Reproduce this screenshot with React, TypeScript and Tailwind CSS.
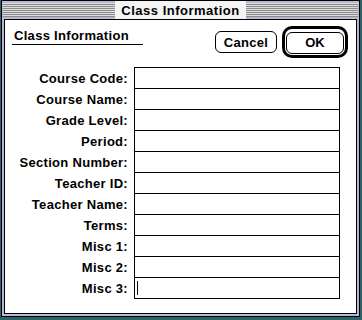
import React from "react";

const fields = [
  "Course Code:",
  "Course Name:",
  "Grade Level:",
  "Period:",
  "Section Number:",
  "Teacher ID:",
  "Teacher Name:",
  "Terms:",
  "Misc 1:",
  "Misc 2:",
  "Misc 3:",
];

export default function App() {
  return (
    <div
      className="w-[362px] h-[320px] bg-[#2a6466] overflow-hidden"
      style={{ fontFamily: '"Liberation Sans", Arial, sans-serif' }}
    >
      {/* window */}
      <div className="ml-[1px] w-[359px] h-[317px] border border-black bg-[#b8b8d6] flex flex-col">
        {/* title bar */}
        <div className="h-[18px] flex items-center bg-[#dcdcdc] bg-[repeating-linear-gradient(to_bottom,#dcdcdc_0px,#dcdcdc_1px,#8c8c8c_1px,#8c8c8c_2px)] bg-clip-content py-[2px] px-[1px]">
          <div className="mx-auto bg-[#f4f4f4] px-[6px] h-[18px] flex items-center text-[13px] font-bold leading-none tracking-[0.5px] text-black">
            Class Information
          </div>
        </div>

        {/* content */}
        <div className="flex-1 mx-[2px] mb-[2px] border border-black bg-white flex flex-col">
          <div className="flex items-start pt-[6px] pl-[7px] pr-[8px]">
            <div className="mt-[3px] w-[131px] border-b border-black pl-[2px] h-[16px] text-[13px] font-bold leading-[14px] tracking-[0.3px]">
              Class Information
            </div>
            <div className="ml-auto flex items-center gap-[5px]">
              <button className="w-[62px] h-[22px] border border-black rounded-[6px] bg-white text-[13px] font-bold leading-none tracking-[0.3px]">
                Cancel
              </button>
              <div className="border-[3px] border-black rounded-[10px] p-[1px]">
                <button className="w-[58px] h-[22px] border border-black rounded-[6px] bg-white text-[13px] font-bold leading-none">
                  OK
                </button>
              </div>
            </div>
          </div>

          <div className="flex mt-[9px]">
            <div className="w-[123px] flex flex-col pt-[1px]">
              {fields.map((f) => (
                <div key={f} className="h-[21px] flex items-center justify-end text-[13px] font-bold tracking-[0.3px] leading-none">
                  {f}
                </div>
              ))}
            </div>
            <div className="ml-[6px] w-[206px] border border-black flex flex-col">
              {fields.map((f, i) => (
                <div key={f} className={`h-[20px] flex items-center pl-[2px] ${i > 0 ? "box-content border-t border-black" : ""}`}>
                  {i === fields.length - 1 && <div className="w-[1px] h-[14px] bg-black" />}
                </div>
              ))}
            </div>
          </div>
        </div>
      </div>
    </div>
  );
}
